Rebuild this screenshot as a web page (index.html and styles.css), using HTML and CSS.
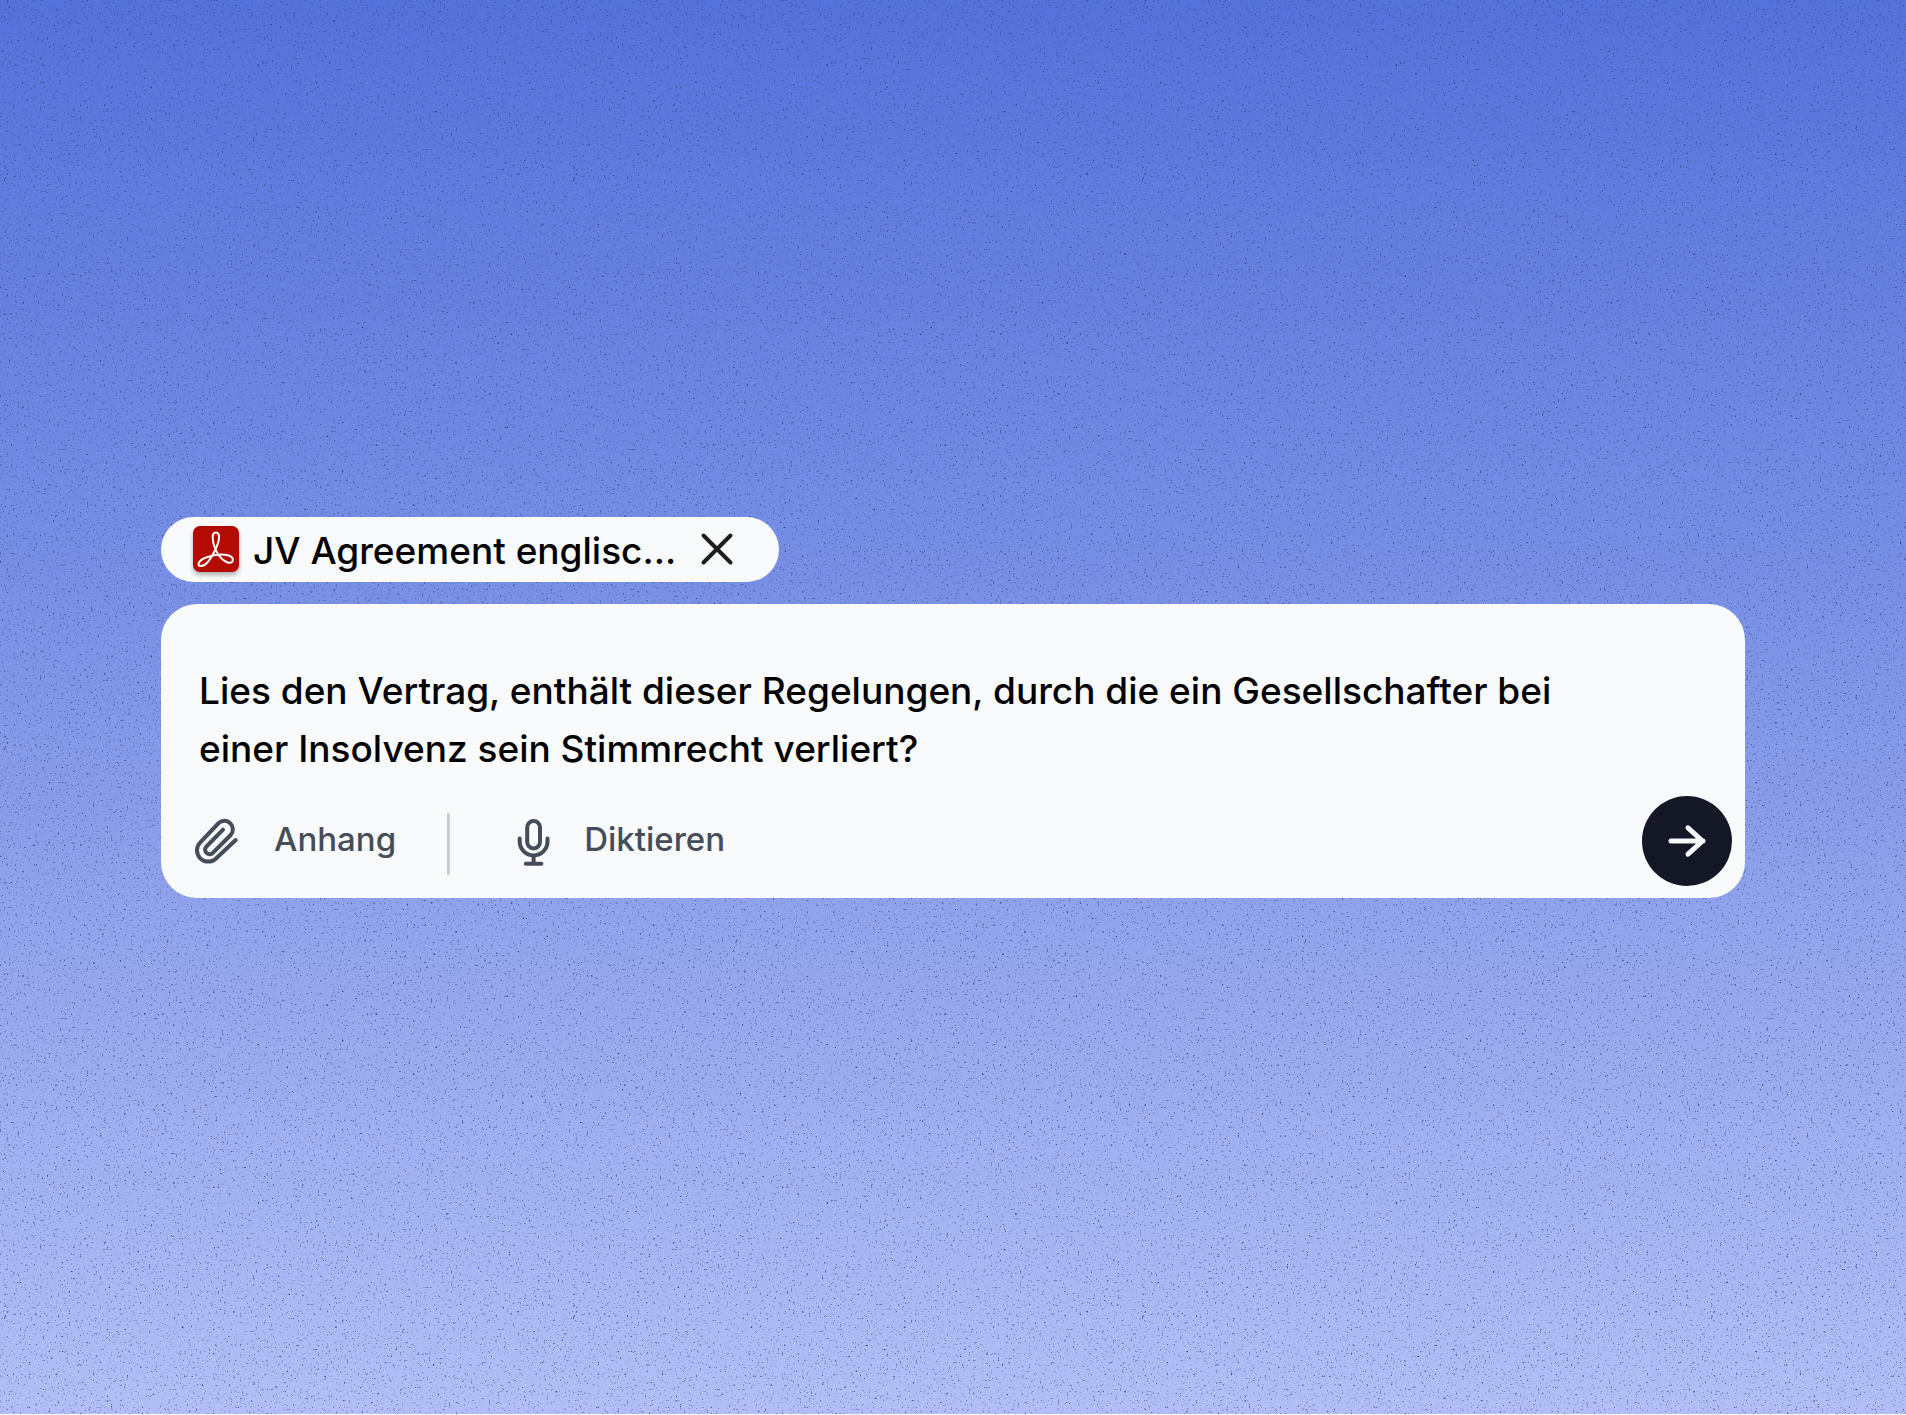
FILE: index.html
```html
<!DOCTYPE html>
<html lang="de">
<head>
    <meta charset="UTF-8">
    <meta name="viewport" content="width=device-width, initial-scale=1.0">
    <title>Vertrag prüfen</title>
    <link rel="stylesheet" href="styles.css">
</head>
<body>

    <main class="stage">
        <!-- Grain over the gradient -->
        <svg class="grain" aria-hidden="true">
            <filter id="grain" x="0" y="0" width="100%" height="100%" color-interpolation-filters="sRGB">
                <feTurbulence type="fractalNoise" baseFrequency="0.45" numOctaves="2" seed="4"/>
                <feColorMatrix values="0 0 0 0 0.2  0 0 0 0 0.27  0 0 0 0 0.48  4 0 0 0 -2.55"/>
            </filter>
            <rect width="100%" height="100%" filter="url(#grain)"/>
        </svg>

        <form class="composer">
            <div class="file-chip">
                <svg class="pdf-icon" viewBox="0 0 46 46" aria-hidden="true">
                    <path d="M23 6.5C27.5 6.5 26.5 15 23.5 21C20 29 14 40 8 40C3.5 40 5 34.5 13 31.5C20 29 27 28.3 32 28.8C38 29.4 41 32 39.5 35.3C38 38.5 31 36.5 26 29.5C22 24 20 17 19.7 12C19.5 8.5 20.5 6.5 23 6.5Z"/>
                </svg>
                <span class="file-name">JV Agreement englisc...</span>
                <button type="button" class="remove" aria-label="Datei entfernen">
                    <svg viewBox="0 0 34 34"><path d="M3.5 3.5L30.5 30.5M30.5 3.5L3.5 30.5"/></svg>
                </button>
            </div>

            <div class="card">
                <textarea class="prompt" rows="2" aria-label="Nachricht">Lies den Vertrag, enthält dieser Regelungen, durch die ein Gesellschafter bei einer Insolvenz sein Stimmrecht verliert?</textarea>

                <div class="toolbar">
                    <button type="button" class="tool">
                        <svg viewBox="0 0 56 56"><path d="M45.7 27L26.3 45.3A11.3 11.3 0 0 1 10.3 29.3L28.7 10A8.5 8.5 0 0 1 40.7 22L22.3 40.3A4.5 4.5 0 0 1 16 34L33 16.7"/></svg>
                        <span class="tool-label">Anhang</span>
                    </button>
                    <span class="divider"></span>
                    <button type="button" class="tool dictate">
                        <svg viewBox="0 0 56 56"><rect x="21.2" y="8" width="12.8" height="27.4" rx="6.4"/><path d="M13.7 25.5V28.5A13.9 13.9 0 0 0 41.5 28.5V25.5M27.6 42.4V50.8M19.8 50.8H35.4"/></svg>
                        <span class="tool-label">Diktieren</span>
                    </button>
                    <button type="submit" class="send" aria-label="Senden">
                        <svg viewBox="0 0 40 40"><path d="M4 20H36M21 6.8L35.5 20L21 33.2"/></svg>
                    </button>
                </div>
            </div>
        </form>
    </main>

</body>
</html>
```
FILE: styles.css
```css
* {
    box-sizing: border-box;
}
body {
    margin: 0;
    background-color: #ffffff;
    font-family: Inter, "Liberation Sans", sans-serif;
}
button {
    padding: 0;
    border: none;
    background: none;
    font: inherit;
    cursor: pointer;
}
svg {
    display: block;
    fill: none;
    stroke-linecap: round;
    stroke-linejoin: round;
}

.stage {
    position: relative;
    display: flex;
    flex-direction: column;
    justify-content: center;
    min-height: calc(100vh - 1px);
    padding: 40px 161px;
    background: linear-gradient(#5672db, #7990e5 42%, #91a3eb 65%, #b1bff6);
}
.grain {
    position: absolute;
    inset: 0;
    width: 100%;
    height: 100%;
}
.composer {
    position: relative;
    display: flex;
    flex-direction: column;
    align-items: flex-start;
    gap: 22px;
}

/* Attached file */
.file-chip {
    display: flex;
    align-items: center;
    height: 65px;
    padding: 0 45px 0 32px;
    border-radius: 33px;
    background-color: #f9fafc;
}
.pdf-icon {
    width: 46px;
    height: 46px;
    border-radius: 7px;
    background-color: #b30b00;
    box-shadow: 0 3px 4px rgba(0, 0, 0, 0.3);
    stroke: #ffffff;
    stroke-width: 2;
}
.file-name {
    margin: 0 24px 0 14px;
    padding-top: 2px;
    font-size: 37px;
    font-weight: 500;
    color: #000000;
}
.remove svg {
    width: 34px;
    height: 34px;
    stroke: #1f1f1f;
    stroke-width: 4;
}

/* Message box */
.card {
    width: 100%;
    padding: 58px 13px 12px 29px;
    border-radius: 36px;
    background-color: #f9fafc;
}
.prompt {
    display: block;
    width: 94%;
    margin: 0 0 18px;
    padding: 0 9px;
    border: none;
    outline: none;
    resize: none;
    overflow: hidden;
    background: none;
    font: inherit;
    font-size: 37px;
    font-weight: 500;
    line-height: 58px;
    color: #000000;
}
.toolbar {
    display: flex;
    align-items: center;
}
.tool {
    display: flex;
    align-items: center;
    gap: 28px;
    font-size: 33px;
    font-weight: 500;
    color: #454d5a;
}
.tool svg {
    width: 56px;
    height: 56px;
    stroke: currentColor;
    stroke-width: 4;
}
.tool-label {
    padding-bottom: 4px;
}
.dictate {
    gap: 22px;
}
.divider {
    width: 3px;
    height: 62px;
    margin: 6px 56px 0 51px;
    background-color: #cacbd4;
}
.send {
    display: flex;
    align-items: center;
    justify-content: center;
    width: 90px;
    height: 90px;
    margin-left: auto;
    border-radius: 50%;
    background-color: #131726;
}
.send svg {
    width: 40px;
    height: 40px;
    stroke: #f9fafc;
    stroke-width: 5;
}
```
